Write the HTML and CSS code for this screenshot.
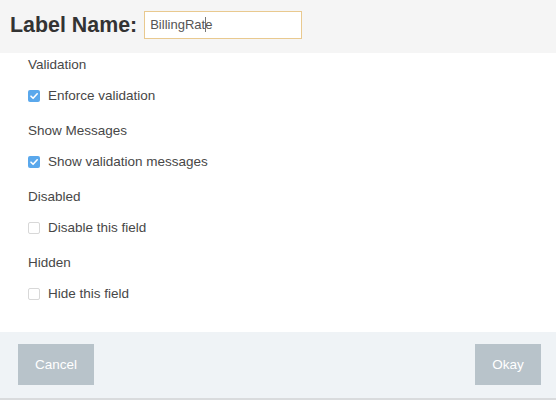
FILE: index.html
```html
<!DOCTYPE html>
<html>
<head>
<meta charset="utf-8">
<link rel="stylesheet" href="styles.css">
</head>
<body>
<div class="dialog">
  <div class="header">
    <span class="title">Label Name:</span>
    <div class="input">BillingRat<span class="caret"></span>e</div>
  </div>
  <div class="content">
    <div class="group">
      <div class="heading">Validation</div>
      <div class="row"><span class="cb checked"><svg viewBox="0 0 12 12" width="12" height="12"><path d="M3 6.2 L5.1 8.3 L9.2 3.8" fill="none" stroke="#fff" stroke-width="1.6" stroke-linecap="round" stroke-linejoin="round"/></svg></span>Enforce validation</div>
    </div>
    <div class="group">
      <div class="heading">Show Messages</div>
      <div class="row"><span class="cb checked"><svg viewBox="0 0 12 12" width="12" height="12"><path d="M3 6.2 L5.1 8.3 L9.2 3.8" fill="none" stroke="#fff" stroke-width="1.6" stroke-linecap="round" stroke-linejoin="round"/></svg></span>Show validation messages</div>
    </div>
    <div class="group">
      <div class="heading">Disabled</div>
      <div class="row"><span class="cb"></span>Disable this field</div>
    </div>
    <div class="group">
      <div class="heading">Hidden</div>
      <div class="row"><span class="cb"></span>Hide this field</div>
    </div>
  </div>
  <div class="footer">
    <button class="btn cancel">Cancel</button>
    <button class="btn okay">Okay</button>
  </div>
</div>
</body>
</html>
```
FILE: styles.css
```css
* { box-sizing: border-box; }
html, body { margin: 0; padding: 0; }
body {
  width: 556px;
  height: 400px;
  overflow: hidden;
  background: #fff;
  font-family: "Liberation Sans", Arial, sans-serif;
  color: #474747;
}
.dialog {
  display: flex;
  flex-direction: column;
  height: 400px;
}
.header {
  height: 53px;
  background: #f5f5f5;
  display: flex;
  align-items: flex-start;
  padding: 11px 0 0 10px;
}
.title {
  font-weight: bold;
  font-size: 21.4px;
  color: #333;
  line-height: 28px;
  margin-right: 7px;
}
.input {
  width: 158px;
  height: 28px;
  border: 1px solid #e9c98f;
  background: #fff;
  font-size: 13px;
  color: #555;
  line-height: 26px;
  padding-left: 5px;
  position: relative;
}
.caret {
  display: inline-block;
  width: 1px;
  height: 15px;
  background: #777;
  vertical-align: -3px;
  margin-right: -1px;
}
.content {
  flex: 1;
  padding: 2px 0 0 28px;
  font-size: 13.5px;
}
.group {
  margin-bottom: 15px;
}
.heading {
  height: 20px;
  line-height: 20px;
  margin-bottom: 11px;
}
.row {
  height: 20px;
  line-height: 20px;
  display: flex;
  align-items: center;
}
.cb {
  width: 12px;
  height: 12px;
  border-radius: 2px;
  border: 1px solid #d8d8d8;
  background: #fff;
  margin-right: 8px;
  display: inline-flex;
  align-items: center;
  justify-content: center;
}
.cb.checked {
  border: none;
  background: #5aa8ec;
}
.footer {
  height: 68px;
  background: #eff3f6;
  border-bottom: 2px solid #d9dbdd;
  display: flex;
  justify-content: space-between;
  align-items: flex-start;
  padding: 12px 15px 0 18px;
}
.btn {
  border: none;
  background: #b8c3ca;
  color: #fff;
  font-family: "Liberation Sans", Arial, sans-serif;
  font-size: 13.5px;
  height: 41px;
  padding: 0;
}
.cancel { width: 76px; }
.okay { width: 66px; }
```
